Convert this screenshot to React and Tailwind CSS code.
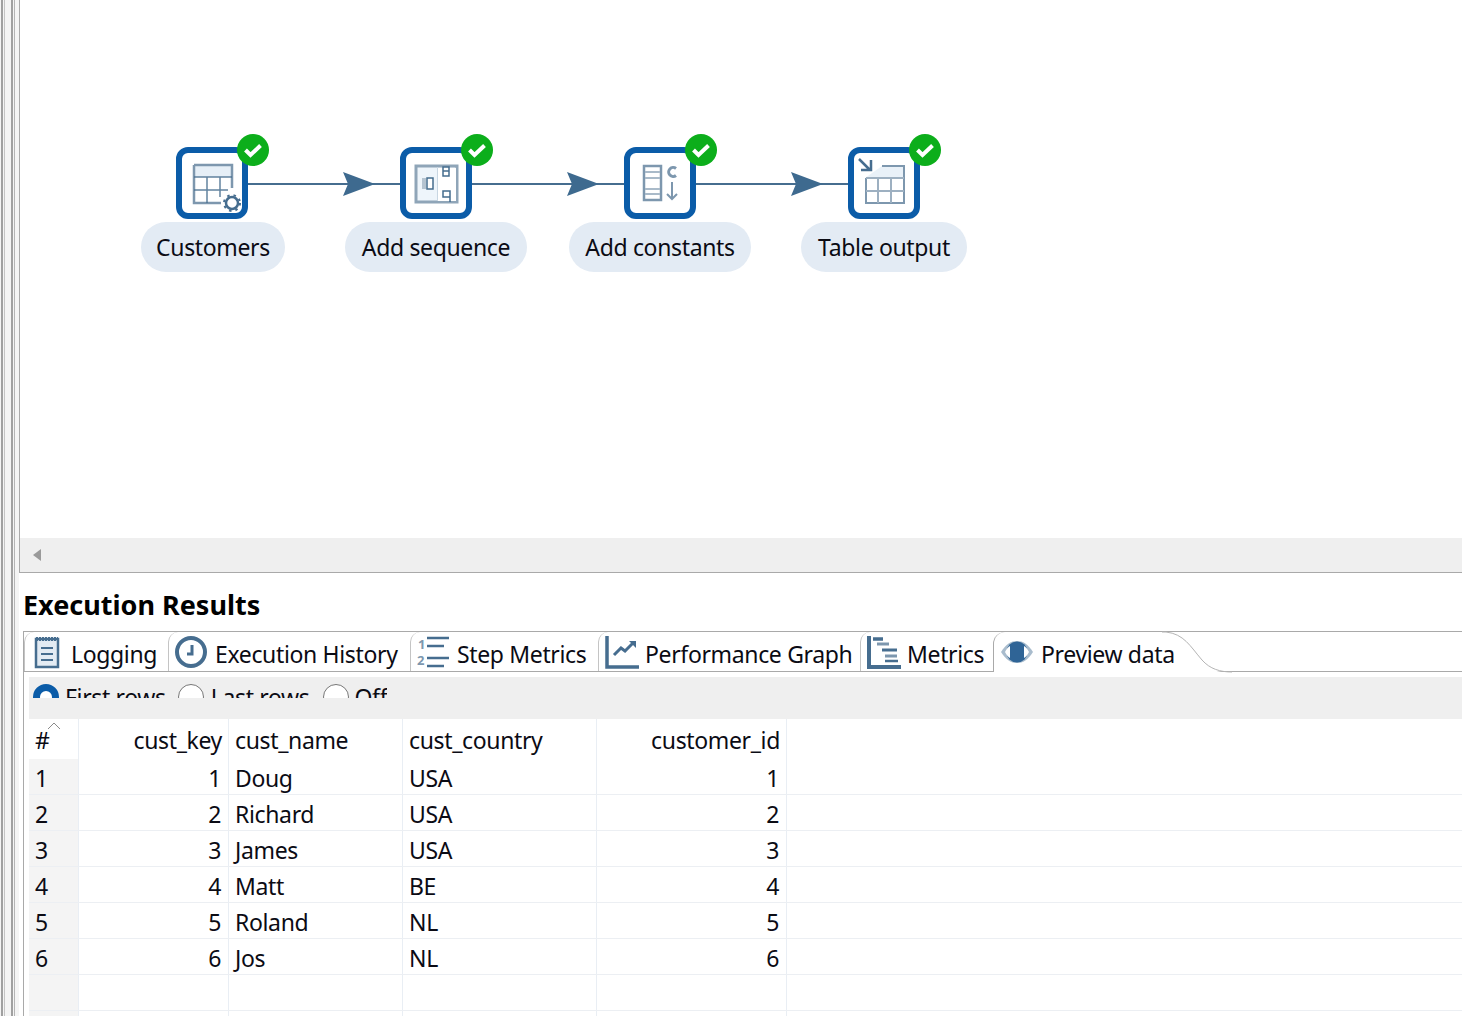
import React from 'react';

const ink = '#466d8f';
const soft = '#7d97ae';

const TableIcon = () => (
  <svg width="60" height="60" viewBox="0 0 60 60" fill="none">
    <rect x="12" y="12" width="38" height="12" fill="#e6eff7" />
    <path d="M12 12h38v23M12 12v38h27" stroke={soft} strokeWidth="2.5" />
    <path d="M12 24h38M12 37h34M25 24v26M38 24v20" stroke={ink} strokeWidth="1.5" opacity="0.85" />
    <circle cx="50" cy="50" r="6" fill="#fff" stroke={ink} strokeWidth="2.5" />
    <circle cx="50" cy="50" r="8" stroke={ink} strokeWidth="2" strokeDasharray="2.5 4" />
  </svg>
);

const SequenceIcon = () => (
  <svg width="60" height="60" viewBox="0 0 60 60" fill="none">
    <rect x="10" y="13" width="41" height="36" fill="#eef5fb" stroke="#8fa5b8" strokeWidth="3" />
    <rect x="32" y="15" width="18" height="33" fill="#fff" />
    <path d="M31.5 14v34" stroke="#c8d6e2" strokeWidth="1" />
    <path d="M16 25h4v11h-4z" fill="#b5c4d1" />
    <path d="M21 25h6v11h-6z" fill="#fff" stroke={ink} strokeWidth="1.5" />
    <path d="M37 14h6v9h-6zM37 18h6M37 38h7v6h-7zM44 44v5" stroke={ink} strokeWidth="1.5" fill="#fff" />
  </svg>
);

const ConstantsIcon = () => (
  <svg width="60" height="60" viewBox="0 0 60 60" fill="none">
    <rect x="14" y="13" width="17" height="34" fill="#fff" stroke={soft} strokeWidth="2.5" />
    <path d="M15 19h15M15 25h15M15 36h15M15 41h15" stroke="#a9bac9" strokeWidth="2" />
    <path d="M46 15.5a4.5 4.5 0 1 0 0 7" stroke={soft} strokeWidth="3" />
    <path d="M42 29v17M37 41l5 5 5-5" stroke={soft} strokeWidth="2" />
  </svg>
);

const OutputIcon = () => (
  <svg width="60" height="60" viewBox="0 0 60 60" fill="none">
    <path d="M11 25l17-12h22v12z" fill="#e9f1f8" />
    <path d="M28 13h22v37H12V25" stroke={soft} strokeWidth="2" />
    <path d="M12 25h38M12 38h38M24 25v25M37 25v25" stroke="#9db0c1" strokeWidth="2" />
    <path d="M5 6l11 11M17 7v10H7" stroke={ink} strokeWidth="2.5" />
  </svg>
);

const nodes = [
  { name: 'Customers', icon: TableIcon, x: 156, pill: 'left-[121px] w-[144px]' },
  { name: 'Add sequence', icon: SequenceIcon, x: 380, pill: 'left-[325px] w-[182px]' },
  { name: 'Add constants', icon: ConstantsIcon, x: 604, pill: 'left-[549px] w-[182px]' },
  { name: 'Table output', icon: OutputIcon, x: 828, pill: 'left-[781px] w-[166px]' },
];

const Hops = () => (
  <svg className="absolute left-0 top-0" width="1000" height="300" fill="none">
    {[228, 452, 676].map((x) => (
      <g key={x}>
        <path d={`M${x} 184h152`} stroke={ink} strokeWidth="2" />
        <path d={`M${x + 95} 172l32 12-32 12 5-12z`} fill="#3e6a8f" />
      </g>
    ))}
  </svg>
);

const Node = ({ node }) => {
  const Icon = node.icon;
  return (
    <>
      <div
        className="absolute top-[147px] flex h-[72px] w-[72px] items-center justify-center rounded-[12px] border-[6px] border-[#0b5ca8] bg-white"
        style={{ left: node.x }}
      >
        <Icon />
      </div>
      <div
        className="absolute top-[134px] flex h-8 w-8 items-center justify-center rounded-full bg-[#0cae1b]"
        style={{ left: node.x + 61 }}
      >
        <svg width="20" height="16" viewBox="0 0 20 16" fill="none">
          <path d="M2.5 8l5 5L17.5 3.5" stroke="#fff" strokeWidth="4" />
        </svg>
      </div>
      <div
        className={`absolute top-[222px] flex h-[50px] items-center justify-center rounded-full bg-[#e3ebf4] ${node.pill}`}
      >
        {node.name}
      </div>
    </>
  );
};

const LogIcon = () => (
  <svg width="26" height="34" viewBox="0 0 26 34" fill="none" className="shrink-0">
    <rect x="2" y="4" width="22" height="28" fill="#e3ebf3" stroke={ink} strokeWidth="2.5" />
    <path d="M2 4h22" stroke={ink} strokeWidth="4" strokeDasharray="2 1" />
    <path d="M7 13h12M7 19h12M7 25h12" stroke={ink} strokeWidth="2" />
  </svg>
);

const HistoryIcon = () => (
  <svg width="34" height="34" viewBox="0 0 34 34" fill="none" className="shrink-0">
    <circle cx="17" cy="17" r="14" fill="#fff" stroke={ink} strokeWidth="4" />
    <path d="M18 10v9h-5" stroke={ink} strokeWidth="3" />
  </svg>
);

const StepIcon = () => (
  <svg width="34" height="34" viewBox="0 0 34 34" fill="none" className="shrink-0">
    <text x="1" y="14" fontSize="13" fontWeight="700" fill={soft} fontFamily="Noto Sans, sans-serif">1</text>
    <text x="0" y="30" fontSize="13" fontWeight="700" fill={soft} fontFamily="Noto Sans, sans-serif">2</text>
    <path d="M10 3h22M10 11h17M10 23h22M10 31h17" stroke={ink} strokeWidth="2.5" />
  </svg>
);

const GraphIcon = () => (
  <svg width="34" height="34" viewBox="0 0 34 34" fill="none" className="shrink-0">
    <path d="M2 1v31h32" stroke={ink} strokeWidth="3.5" />
    <path d="M9 20l7-7 4 3 8-8" stroke={ink} strokeWidth="3" />
    <path d="M24 6h7v7z" fill={ink} />
  </svg>
);

const MetricsIcon = () => (
  <svg width="34" height="34" viewBox="0 0 34 34" fill="none" className="shrink-0">
    <path d="M2 1v31h32" stroke={ink} strokeWidth="4" />
    <path d="M6 4h10" stroke={ink} strokeWidth="3.5" />
    <path d="M10 9h12" stroke={soft} strokeWidth="3" />
    <path d="M15 15h15" stroke={ink} strokeWidth="3" />
    <path d="M18 21h12" stroke={soft} strokeWidth="3" />
    <path d="M18 26h13" stroke={ink} strokeWidth="2.5" />
  </svg>
);

const EyeIcon = () => (
  <svg width="34" height="24" viewBox="0 0 34 24" fill="none" className="shrink-0">
    <path d="M1 12C6 4 11 1 17 1s11 3 16 11c-5 8-10 11-16 11S6 20 1 12z" fill="#a9bccd" />
    <circle cx="17" cy="12" r="10.5" fill="#2f6496" />
    <path d="M5 12c1.5-3 3-5 5-6v12c-2-1-3.5-3-5-6zM29 12c-1.5-3-3-5-5-6v12c2-1 3.5-3 5-6z" fill="#fff" />
  </svg>
);

const tabs = [
  { label: 'Logging', icon: LogIcon, w: 'w-[144px]', pad: 'pl-[9px]', gap: 'gap-[11px]' },
  { label: 'Execution History', icon: HistoryIcon, w: 'w-[242px]', pad: 'pl-[5px]', gap: 'gap-[7px]' },
  { label: 'Step Metrics', icon: StepIcon, w: 'w-[188px]', pad: 'pl-[6px]', gap: 'gap-[6px]' },
  { label: 'Performance Graph', icon: GraphIcon, w: 'w-[262px]', pad: 'pl-[6px]', gap: 'gap-[6px]' },
  { label: 'Metrics', icon: MetricsIcon, w: 'w-[133px]', pad: 'pl-[6px]', gap: 'gap-[6px]' },
];

const columns = [
  { key: 'idx', title: '#', w: 'w-[50px]' },
  { key: 'cust_key', title: 'cust_key', w: 'w-[150px]', right: true },
  { key: 'cust_name', title: 'cust_name', w: 'w-[174px]' },
  { key: 'cust_country', title: 'cust_country', w: 'w-[194px]' },
  { key: 'customer_id', title: 'customer_id', w: 'w-[190px]', right: true },
];

const rows = [
  [1, 1, 'Doug', 'USA', 1],
  [2, 2, 'Richard', 'USA', 2],
  [3, 3, 'James', 'USA', 3],
  [4, 4, 'Matt', 'BE', 4],
  [5, 5, 'Roland', 'NL', 5],
  [6, 6, 'Jos', 'NL', 6],
  ['', '', '', '', ''],
  ['', '', '', '', ''],
];

const Row = ({ cells }) => (
  <div className="flex h-[36px] shrink-0 items-center border-b border-[#eceff3]">
    {cells.map((cell, i) => (
      <div
        key={columns[i].key}
        className={`flex h-full shrink-0 items-center border-r border-[#e9eef4] pt-[3px] ${columns[i].w} ${
          columns[i].right ? 'justify-end pr-[7px]' : 'pl-[6px]'
        } ${i === 0 ? 'bg-[#f4f4f4]' : ''}`}
      >
        {cell}
      </div>
    ))}
  </div>
);

export default function App() {
  return (
    <div className="flex h-[1016px] w-[1462px] overflow-hidden bg-white text-[23px] leading-none tracking-[-0.35px] text-[#0b0b14] [font-family:'Noto_Sans',sans-serif]">
      {/* sash lines down the left */}
      <div className="flex w-[19px] shrink-0 bg-[#f4f4f4]">
        <div className="ml-[1px] w-[2px] bg-[#a0a0a0]" />
        <div className="ml-[1px] w-[1px] bg-[#c4c4c4]" />
        <div className="ml-[6px] w-[2px] bg-[#a0a0a0]" />
        <div className="ml-[1px] w-[1px] bg-[#b4b4b4]" />
      </div>

      <div className="flex min-w-0 flex-1 flex-col">
        <div className="flex h-[573px] shrink-0 flex-col border-l border-[#a9a9a9]">
          <div className="relative h-[538px] shrink-0">
            <Hops />
            {nodes.map((node) => (
              <Node key={node.name} node={node} />
            ))}
          </div>
          <div className="flex h-[35px] shrink-0 items-center border-b border-[#a9a9a9] bg-[#efefef] pl-[12px]">
            <svg width="10" height="14" viewBox="0 0 10 14">
              <path d="M9 1v12L1 7z" fill="#9a9a9a" />
            </svg>
          </div>
        </div>

        <div className="flex min-h-0 flex-1 flex-col pl-[4px]">
          <h2 className="flex h-[58px] shrink-0 items-center pt-[4px] text-[27px] font-bold tracking-normal text-black">Execution Results</h2>

          <div className="flex min-h-0 flex-1 flex-col border-l border-[#a9a9a9]">
            <div className="relative flex h-[41px] shrink-0 border-t border-b border-[#a9a9a9]">
              {tabs.map((tab) => {
                const Icon = tab.icon;
                return (
                  <div
                    key={tab.label}
                    className={`flex h-[39px] shrink-0 items-center whitespace-nowrap rounded-tl-[10px] border-l border-[#c4c4c4] ${tab.w} ${tab.pad} ${tab.gap}`}
                  >
                    <Icon />
                    <span className="pt-[5px]">{tab.label}</span>
                  </div>
                );
              })}
              <div className="absolute left-[969px] top-0 flex h-[40px] w-[170px] items-center gap-[7px] whitespace-nowrap rounded-tl-[12px] border-l border-[#a9a9a9] bg-white pl-[6px]">
                <EyeIcon />
                <span className="relative z-20 pt-[5px]">Preview data</span>
              </div>
              <svg className="absolute left-[1138px] -top-[1px] z-10" width="72" height="42" fill="none">
                <path d="M0 3h2c18 1 24 13 36 27 8 9 18 11 32 12H0z" fill="#fff" />
                <path d="M0 1h4c18 2 24 14 36 28 8 9 18 12 30 12" stroke="#b4b4b4" strokeWidth="1" />
              </svg>
            </div>

            <div className="ml-[5px] mt-[5px] flex min-h-0 flex-1 flex-col overflow-hidden">
              <div className="flex h-[42px] shrink-0 items-start overflow-hidden bg-[#efefef] pl-[4px]">
                <div className="flex h-[21px] items-start overflow-hidden">
                  <div className="mt-[7px] flex items-center">
                    <span className="h-[26px] w-[26px] rounded-full border-[7px] border-[#0b5ca8] bg-white" />
                    <span className="ml-[6px]">First rows</span>
                    <span className="ml-[12px] h-[26px] w-[26px] rounded-full border border-[#777] bg-white" />
                    <span className="ml-[7px]">Last rows</span>
                    <span className="ml-[14px] h-[26px] w-[26px] rounded-full border border-[#777] bg-white" />
                    <span className="ml-[5px]">Off</span>
                  </div>
                </div>
              </div>

              <div className="relative flex h-[40px] shrink-0 items-center">
                {columns.map((col) => (
                  <div
                    key={col.key}
                    className={`flex h-full shrink-0 items-center border-r border-[#e9eef4] pt-[3px] ${col.w} ${
                      col.right ? 'justify-end pr-[6px]' : 'pl-[6px]'
                    }`}
                  >
                    {col.title}
                  </div>
                ))}
                <svg className="absolute left-[18px] top-[3px]" width="14" height="8" fill="none">
                  <path d="M1 7l6-6 6 6" stroke="#8a8a8a" />
                </svg>
              </div>

              {rows.map((cells, i) => (
                <Row key={i} cells={cells} />
              ))}
            </div>
          </div>
        </div>
      </div>
    </div>
  );
}
